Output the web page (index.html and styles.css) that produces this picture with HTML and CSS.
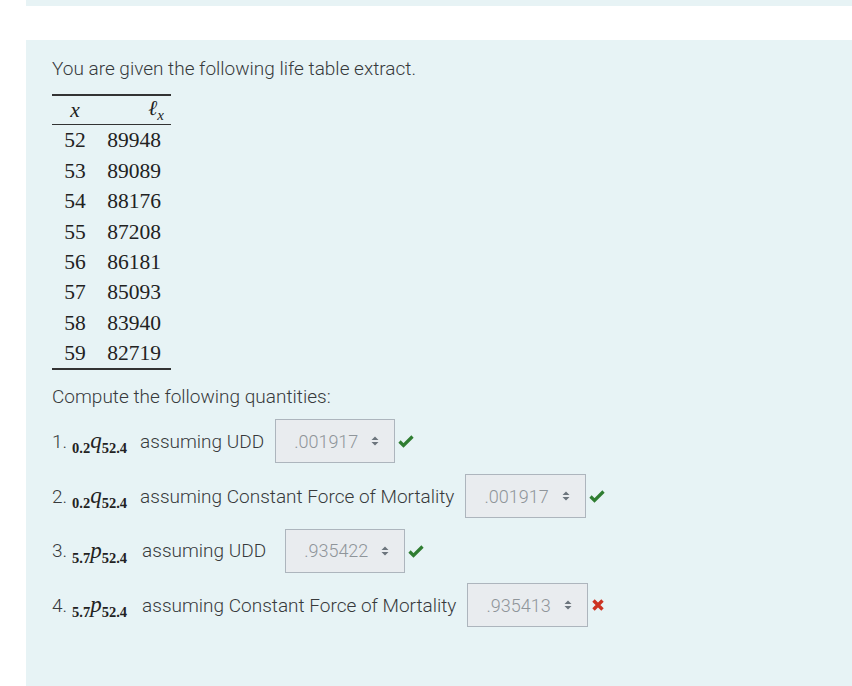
FILE: index.html
```html
<!DOCTYPE html>
<html>
<head>
<meta charset="utf-8">
<link rel="stylesheet" href="styles.css">
</head>
<body>
<div class="topstrip"></div>
<div class="panel">
  <p class="intro">You are given the following life table extract.</p>
  <table class="life">
    <thead>
      <tr><th class="c1"><i>x</i></th><th class="c2"><i>ℓ</i><sub><i>x</i></sub></th></tr>
    </thead>
    <tbody>
      <tr><td class="c1">52</td><td class="c2">89948</td></tr>
      <tr><td class="c1">53</td><td class="c2">89089</td></tr>
      <tr><td class="c1">54</td><td class="c2">88176</td></tr>
      <tr><td class="c1">55</td><td class="c2">87208</td></tr>
      <tr><td class="c1">56</td><td class="c2">86181</td></tr>
      <tr><td class="c1">57</td><td class="c2">85093</td></tr>
      <tr><td class="c1">58</td><td class="c2">83940</td></tr>
      <tr><td class="c1">59</td><td class="c2">82719</td></tr>
    </tbody>
  </table>
  <p class="compute">Compute the following quantities:</p>
  <div class="q first">
    <span class="num">1.</span>
    <span class="math"><span class="pre">0.2</span><i>q</i><span class="post">52.4</span></span>
    <span class="label">assuming UDD</span>
    <span class="sel">.001917<svg class="arr" width="8" height="12" viewBox="0 0 8 12"><path d="M0.5 5 L4 1.5 L7.5 5 Z M0.5 7 L4 10.5 L7.5 7 Z" fill="#6c757d"/></svg></span>
    <svg class="mark" width="16" height="14" viewBox="0 0 16 14"><path d="M1.5 7.5 L5.5 11.5 L14.5 2.5" fill="none" stroke="#2f7d31" stroke-width="3.2"/></svg>
  </div>
  <div class="q">
    <span class="num">2.</span>
    <span class="math"><span class="pre">0.2</span><i>q</i><span class="post">52.4</span></span>
    <span class="label">assuming Constant Force of Mortality</span>
    <span class="sel">.001917<svg class="arr" width="8" height="12" viewBox="0 0 8 12"><path d="M0.5 5 L4 1.5 L7.5 5 Z M0.5 7 L4 10.5 L7.5 7 Z" fill="#6c757d"/></svg></span>
    <svg class="mark" width="16" height="14" viewBox="0 0 16 14"><path d="M1.5 7.5 L5.5 11.5 L14.5 2.5" fill="none" stroke="#2f7d31" stroke-width="3.2"/></svg>
  </div>
  <div class="q">
    <span class="num">3.</span>
    <span class="math wide"><span class="pre">5.7</span><i>p</i><span class="post">52.4</span></span>
    <span class="label loose">assuming UDD</span>
    <span class="sel">.935422<svg class="arr" width="8" height="12" viewBox="0 0 8 12"><path d="M0.5 5 L4 1.5 L7.5 5 Z M0.5 7 L4 10.5 L7.5 7 Z" fill="#6c757d"/></svg></span>
    <svg class="mark" width="16" height="14" viewBox="0 0 16 14"><path d="M1.5 7.5 L5.5 11.5 L14.5 2.5" fill="none" stroke="#2f7d31" stroke-width="3.2"/></svg>
  </div>
  <div class="q">
    <span class="num">4.</span>
    <span class="math wide"><span class="pre">5.7</span><i>p</i><span class="post">52.4</span></span>
    <span class="label">assuming Constant Force of Mortality</span>
    <span class="sel">.935413<svg class="arr" width="8" height="12" viewBox="0 0 8 12"><path d="M0.5 5 L4 1.5 L7.5 5 Z M0.5 7 L4 10.5 L7.5 7 Z" fill="#6c757d"/></svg></span>
    <svg class="mark" width="14" height="14" viewBox="0 0 14 14"><path d="M2.5 2.5 L11.5 11.5 M11.5 2.5 L2.5 11.5" fill="none" stroke="#cc3322" stroke-width="3.4"/></svg>
  </div>
</div>
</body>
</html>
```
FILE: styles.css
```css
html, body {
  margin: 0;
  padding: 0;
  background: #fff;
}
body {
  font-family: Roboto, "Liberation Sans", sans-serif;
  font-weight: 300;
  color: #373a3c;
  font-size: 19px;
  height: 686px;
  overflow: hidden;
}
.topstrip {
  margin-left: 26px;
  height: 6px;
  background: #e7f3f5;
}
.panel {
  margin-left: 26px;
  margin-top: 34px;
  background: #e7f3f5;
  padding: 16px 26px 0 26px;
  height: 660px;
  box-sizing: border-box;
}
.intro, .compute {
  margin: 0;
  line-height: 25px;
}
.life {
  margin-top: 13px;
  border-collapse: collapse;
  border-top: 2px solid #333;
  border-bottom: 2px solid #333;
  font-family: "Liberation Serif", "DejaVu Serif", serif;
  font-size: 21.5px;
  font-weight: 400;
  color: #222;
}
.life th {
  font-weight: 400;
  height: 28px;
  padding: 0;
  border-bottom: 1px solid #333;
}
.life td {
  height: 30.4px;
  padding: 0;
  line-height: 20px;
}
.life .c1 {
  width: 46px;
  text-align: center;
  padding-right: 2px;
}
.life .c2 {
  width: 61px;
  text-align: right;
  padding-right: 10px;
}
.life th.c2 {
  padding-right: 7px;
}
.life th sub {
  font-size: 15px;
}
.compute {
  margin-top: 14px;
}
.q {
  display: flex;
  align-items: center;
  height: 44px;
  margin-top: 10.6px;
}
.q.first {
  margin-top: 10px;
}
.num {
  margin-right: 5px;
}
.math {
  font-family: "Liberation Serif", "DejaVu Serif", serif;
  font-weight: 700;
  color: #222;
  margin-right: 13px;
}
.math.wide {
  margin-right: 15px;
}
.math i {
  font-size: 23px;
  font-weight: 400;
}
.math .pre, .math .post {
  font-size: 14.5px;
  position: relative;
  top: 5px;
}
.label {
  margin-right: 11px;
}
.label.loose {
  margin-right: 19px;
}
.sel {
  display: inline-flex;
  align-items: center;
  height: 44px;
  box-sizing: border-box;
  border: 1px solid #adb5bd;
  background: #e9ecef;
  color: #8f959a;
  font-size: 18px;
  padding: 0 15px 0 18px;
}
.arr {
  margin-left: 13px;
}
.mark {
  margin-left: 3px;
}
```
